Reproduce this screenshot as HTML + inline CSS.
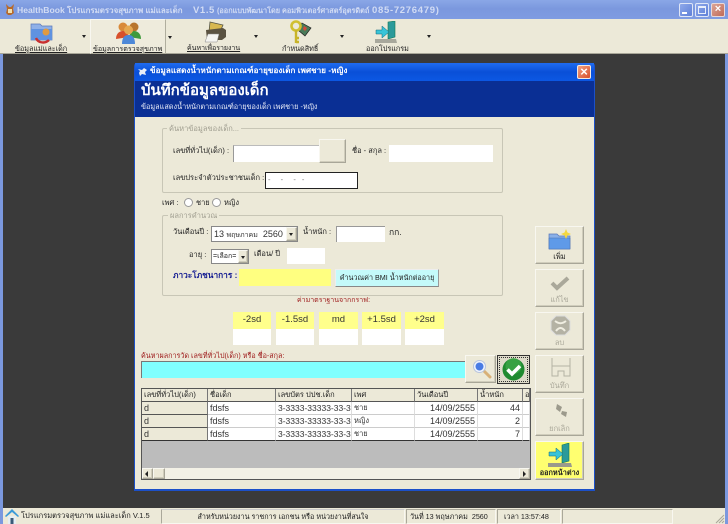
<!DOCTYPE html>
<html lang="th"><head><meta charset="utf-8"><title>HealthBook</title>
<style>
*{box-sizing:border-box}
html,body{margin:0;padding:0;width:728px;height:524px;overflow:hidden;background:#3a3a3a}
body{position:relative;font-family:"Liberation Sans","DejaVu Sans","Noto Sans CJK SC",sans-serif;font-size:7.5px;color:#222;filter:blur(.35px)}
.a{position:absolute;white-space:nowrap}
.t{position:absolute;white-space:nowrap;line-height:12px;height:12px}
.w{position:absolute;background:#fff}
.g{position:absolute;border:1px solid #c8c6b6;border-radius:2px}
.b{position:absolute;background:#ece9d8;border:1px solid;border-color:#f8f7f0 #a8a698 #a8a698 #f8f7f0;box-shadow:inset -1px -1px 0 #d0cdbc}
.btxt{position:absolute;left:0;right:0;bottom:1px;text-align:center;line-height:10px;font-size:7.5px;white-space:nowrap}
.dis{color:#aaa89a}
.arr{position:absolute;width:0;height:0;border:2px solid transparent;border-top:3px solid #222;border-bottom:0}
.cell{position:absolute;height:13px;line-height:12px;background:#fff;border-right:1px solid #ddd;border-bottom:1px solid #ccc;font-size:9px;color:#333;padding:0 2px;white-space:nowrap;overflow:hidden}
.h{background:#ece9d8;border-right:1px solid #777;border-bottom:1px solid #555;color:#222;font-size:7.5px}
.f{background:#ece9d8;border-right:1px solid #777;border-bottom:1px solid #555}
.r{text-align:right}
.sd{position:absolute;top:312px;height:17px;background:#ffff8c;text-align:center;line-height:15px;font-size:9.5px;color:#333}
.sw{position:absolute;top:329px;height:16px;background:#fff}
.sec{position:absolute;top:509px;height:15px;border:1px solid;border-color:#aaa89a #f8f7f0 #f8f7f0 #aaa89a;line-height:13px;font-size:7.2px;white-space:nowrap}
.tt{position:absolute;top:4px;white-space:nowrap;font-weight:bold;color:#d2dcf4;line-height:13px;height:13px}
.tb{position:absolute;top:43px;white-space:nowrap;line-height:12px;height:12px;font-size:7.2px}
</style></head><body>

<!-- main title bar -->
<div class="a" style="left:0;top:0;width:728px;height:19px;background:linear-gradient(180deg,#8aa7e6 0,#7b98de 45%,#7f9ce2 100%)"></div>
<svg class="a" style="left:4px;top:3px" width="12" height="13" viewBox="0 0 12 13"><path d="M2 1l3 3 2 0 3-3-1 5 1 4-3 2H4L2 10l1-4z" fill="#b86a2a"/><path d="M4 6h4v4H4z" fill="#f0e0b0"/></svg>
<div class="tt" style="left:17px;font-size:8.6px">HealthBook</div>
<div class="tt" style="left:67px;font-size:7.9px">โปรแกรมตรวจสุขภาพ แม่และเด็ก</div>
<div class="tt" style="left:193px;font-size:9.5px;letter-spacing:.6px">V1.5</div>
<div class="tt" style="left:217px;font-size:7.3px">(ออกแบบพัฒนาโดย คอมพิวเตอร์ศาสตร์อุตรดิตถ์</div>
<div class="tt" style="left:372px;font-size:9.5px;letter-spacing:.7px">085-7276479)</div>
<div class="a" style="left:679px;top:3px;width:14px;height:14px;background:linear-gradient(135deg,#8fa9ea,#5f80d8);border:1px solid #dfe6f7;border-radius:2px"><div class="a" style="left:2px;top:8px;width:5px;height:2px;background:#fff"></div></div>
<div class="a" style="left:695px;top:3px;width:14px;height:14px;background:linear-gradient(135deg,#8fa9ea,#5f80d8);border:1px solid #dfe6f7;border-radius:2px"><div class="a" style="left:2px;top:2px;width:8px;height:8px;border:1px solid #e8eefa;border-top-width:2px"></div></div>
<div class="a" style="left:711px;top:3px;width:14px;height:14px;background:linear-gradient(135deg,#dca596,#c06a58);border:1px solid #e8d8d8;border-radius:2px;color:#fff;font-size:11px;line-height:11px;text-align:center;font-weight:bold">×</div>

<!-- toolbar -->
<div class="a" style="left:0;top:19px;width:728px;height:35px;background:#ece9d8;border-bottom:1px solid #a8a698"></div>
<div class="a" style="left:90px;top:19px;width:76px;height:35px;background:#eeebdc;border:1px solid;border-color:#f8f7f0 #b0ae9e #b0ae9e #f8f7f0"></div>

<svg class="a" style="left:29px;top:21px" width="28" height="24" viewBox="0 0 28 24"><path d="M2 3h9l2 2h10v14H2z" fill="#8fb0e8" stroke="#5a78b8" stroke-width=".7"/><path d="M2 8h21v11H2z" fill="#5f92e0"/><circle cx="17" cy="11" r="3.5" fill="#e09a40"/><path d="M7 17c2 5 9 6 13 2" fill="none" stroke="#c83030" stroke-width="2.4"/></svg>
<div class="tb" style="left:15px;text-decoration:underline">ข้อมูลแม่และเด็ก</div>
<div class="arr" style="left:82px;top:35px"></div>

<svg class="a" style="left:115px;top:20px" width="27" height="24" viewBox="0 0 27 24"><circle cx="8" cy="7" r="4.5" fill="#d98a3a"/><circle cx="19" cy="7" r="4.5" fill="#b8752c"/><path d="M1 19c0-6 4-8 7-8s5 2 6 6z" fill="#d8502c"/><path d="M14 17c1-4 3-6 5-6 3 0 7 2 7 8z" fill="#3f9a3c"/><circle cx="13.500" cy="10" r="4.500" fill="#e6a850"/><path d="M7 24c0-7 3-9 6.500-9s6.500 2 6.500 9z" fill="#4d88d8"/></svg>
<div class="tb" style="left:93px;font-size:7.1px;text-decoration:underline">ข้อมูลการตรวจสุขภาพ</div>
<div class="arr" style="left:168px;top:36px"></div>

<svg class="a" style="left:203px;top:21px" width="24" height="23" viewBox="0 0 24 23"><path d="M7 1l13 3-3 7H6z" fill="#d8b850" stroke="#554" stroke-width=".8"/><path d="M3 9l17-2 3 2v7l-4 3H4z" fill="#5a5240"/><path d="M5 13h11l-2 8H2z" fill="#f4f4f0" stroke="#888" stroke-width=".5"/></svg>
<div class="tb" style="left:187px;font-size:7px;text-decoration:underline">ค้นหาเพื่อรายงาน</div>
<div class="arr" style="left:254px;top:35px"></div>

<svg class="a" style="left:289px;top:20px" width="24" height="25" viewBox="0 0 24 25"><path d="M13 3l9 5-6 8-7-6z" fill="#4a7a58" stroke="#222" stroke-width=".7"/><path d="M15 6l3 2-2 3-2-2z" fill="#d84838"/><circle cx="7" cy="6" r="4.500" fill="none" stroke="#d0c030" stroke-width="2.600"/><path d="M7 10v13M7 18h3M7 22h3" stroke="#c8b428" stroke-width="2.400" fill="none"/></svg>
<div class="tb" style="left:282px">กำหนดสิทธิ์</div>
<div class="arr" style="left:340px;top:35px"></div>

<svg class="a" style="left:375px;top:21px" width="23" height="23" viewBox="0 0 23 23"><path d="M13 1l7-1v16l-7 2z" fill="#2b9a9a" stroke="#175" stroke-width=".6"/><path d="M1 9h6V5l7 6-7 6v-4H1z" fill="#38c4d8" stroke="#167" stroke-width=".5"/><path d="M0 18h21l1 4H0z" fill="#a8a89c"/></svg>
<div class="tb" style="left:366px">ออกโปรแกรม</div>
<div class="arr" style="left:427px;top:35px"></div>

<!-- outer frame -->
<div class="a" style="left:0;top:54px;width:3px;height:470px;background:#7b98de"></div>
<div class="a" style="left:725px;top:54px;width:3px;height:470px;background:#7b98de"></div>

<!-- dialog -->
<div class="a" style="left:134px;top:63px;width:461px;height:428px;background:#1c50c8;border-radius:3px 3px 0 0"></div>
<div class="a" style="left:135px;top:63px;width:459px;height:18px;background:linear-gradient(180deg,#1f6cf0,#0a50d8 50%,#0c58e4)"></div>
<svg class="a" style="left:138px;top:67px" width="10" height="10" viewBox="0 0 10 10"><path d="M0 2l4 1 2-2 3 2-2 2 1 3-4-1-2 2-1-3 1-2z" fill="#e8eef8"/></svg>
<div class="t" style="left:150px;top:65px;color:#fff;font-size:8px;font-weight:bold;letter-spacing:.1px">ข้อมูลแสดงน้ำหนักตามเกณฑ์อายุของเด็ก เพศชาย -หญิง</div>
<div class="a" style="left:577px;top:65px;width:14px;height:14px;background:linear-gradient(135deg,#f0a080,#d8502c);border:1px solid #f4e8e0;border-radius:2px;color:#fff;font-size:13px;line-height:11px;text-align:center;font-weight:bold">×</div>
<div class="a" style="left:135px;top:81px;width:459px;height:36px;background:#0a2f94"></div>
<div class="t" style="left:141px;top:82px;color:#fff;font-size:15px;font-weight:bold;line-height:18px;height:18px">บันทึกข้อมูลของเด็ก</div>
<div class="t" style="left:141px;top:101px;color:#e4e8f6;font-size:7.3px">ข้อมูลแสดงน้ำหนักตามเกณฑ์อายุของเด็ก เพศชาย -หญิง</div>
<div class="a" style="left:135px;top:117px;width:459px;height:372px;background:#ece9d8"></div>

<!-- group 1 -->
<div class="g" style="left:162px;top:128px;width:341px;height:65px"></div>
<div class="t" style="left:167px;top:123px;padding:0 2px;background:#ece9d8;color:#a09e90">ค้นหาข้อมูลของเด็ก...</div>
<div class="t" style="left:173px;top:145px">เลขที่ทั่วไป(เด็ก) :</div>
<div class="w" style="left:233px;top:145px;width:87px;height:17px;border-left:1px solid #999;border-top:1px solid #bbb"></div>
<div class="b" style="left:319px;top:139px;width:27px;height:24px"></div>
<div class="t" style="left:352px;top:145px">ชื่อ - สกุล :</div>
<div class="w" style="left:389px;top:145px;width:104px;height:17px"></div>
<div class="t" style="left:173px;top:172px">เลขประจำตัวประชาชนเด็ก :</div>
<div class="w" style="left:265px;top:172px;width:93px;height:17px;border:1px solid #222;line-height:14px;padding-left:2px;color:#777;letter-spacing:2px">- &nbsp;- &nbsp;- -</div>

<div class="t" style="left:162px;top:197px">เพศ :</div>
<div class="a" style="left:184px;top:198px;width:9px;height:9px;border-radius:50%;background:#fff;border:1px solid #999"></div>
<div class="t" style="left:196px;top:197px">ชาย</div>
<div class="a" style="left:212px;top:198px;width:9px;height:9px;border-radius:50%;background:#fff;border:1px solid #999"></div>
<div class="t" style="left:224px;top:197px">หญิง</div>

<!-- group 2 -->
<div class="g" style="left:162px;top:215px;width:341px;height:81px"></div>
<div class="t" style="left:168px;top:210px;padding:0 2px;background:#ece9d8;color:#a09e90">ผลการคำนวณ</div>
<div class="t" style="left:173px;top:226px">วันเดือนปี :</div>
<div class="w" style="left:211px;top:226px;width:87px;height:16px;border:1px solid #888;font-size:9px;line-height:14px;padding-left:2px;color:#333">13 <span style="font-size:7px">พฤษภาคม</span> &nbsp;2560</div>
<div class="b" style="left:286px;top:227px;width:11px;height:14px"><div class="arr" style="left:2px;top:5px"></div></div>
<div class="t" style="left:303px;top:226px">น้ำหนัก :</div>
<div class="w" style="left:336px;top:226px;width:49px;height:16px;border-left:1px solid #999;border-top:1px solid #999"></div>
<div class="t" style="left:389px;top:226px;font-size:8.500px">กก.</div>
<div class="t" style="left:189px;top:249px">อายุ :</div>
<div class="w" style="left:211px;top:249px;width:38px;height:15px;border:1px solid #888;font-size:7px;line-height:13px;padding-left:1px">=เลือก=</div>
<div class="b" style="left:238px;top:250px;width:10px;height:13px"><div class="arr" style="left:2px;top:5px"></div></div>
<div class="t" style="left:254px;top:248px">เดือน/ ปี</div>
<div class="w" style="left:287px;top:248px;width:38px;height:16px"></div>
<div class="t" style="left:173px;top:269px;font-size:8.300px;font-weight:bold;color:#101890">ภาวะโภชนาการ :</div>
<div class="a" style="left:239px;top:269px;width:92px;height:17px;background:#ffff80"></div>
<div class="a" style="left:335px;top:269px;width:104px;height:18px;background:#c4fafa;border:1px solid;border-color:#eee #999 #888 #eee;font-size:7.2px;line-height:15px;text-align:center">คำนวณค่า BMI น้ำหนักต่ออายุ</div>

<div class="t" style="left:297px;top:295px;font-size:7px;color:#a02020">ค่ามาตราฐานจากกราฟ:</div>
<div class="sd" style="left:233px;width:38px">-2sd</div><div class="sw" style="left:233px;width:38px"></div>
<div class="sd" style="left:276px;width:38px">-1.5sd</div><div class="sw" style="left:276px;width:38px"></div>
<div class="sd" style="left:319px;width:39px">md</div><div class="sw" style="left:319px;width:39px"></div>
<div class="sd" style="left:362px;width:39px">+1.5sd</div><div class="sw" style="left:362px;width:39px"></div>
<div class="sd" style="left:405px;width:39px">+2sd</div><div class="sw" style="left:405px;width:39px"></div>

<div class="t" style="left:141px;top:350px;font-size:7.2px;color:#a02020">ค้นหาผลการวัด เลขที่ทั่วไป(เด็ก) หรือ ชื่อ-สกุล:</div>
<div class="a" style="left:141px;top:361px;width:325px;height:17px;background:#80ffff;border-left:1px solid #777;border-top:1px solid #777"></div>
<div class="b" style="left:465px;top:355px;width:31px;height:28px"></div>
<svg class="a" style="left:472px;top:359px" width="20" height="20" viewBox="0 0 20 20"><path d="M11 11l7 7" stroke="#d8b078" stroke-width="3" stroke-linecap="round"/><circle cx="7.500" cy="7.500" r="6" fill="#f0f4fc" stroke="#b8c4dc"/><circle cx="7.500" cy="7.500" r="4" fill="#4a7ce4"/></svg>
<div class="a" style="left:497px;top:355px;width:33px;height:29px;background:#dedbca;border:1px solid #333"></div>
<div class="a" style="left:499px;top:357px;width:29px;height:25px;border:1px dotted #333"></div>
<svg class="a" style="left:502px;top:358px" width="23" height="23" viewBox="0 0 23 23"><circle cx="11.500" cy="11.500" r="11" fill="#1f8a30"/><circle cx="11.500" cy="8" r="8" fill="#48b050" opacity=".6"/><path d="M5.500 11.500l4.500 4.500 8-8" fill="none" stroke="#fff" stroke-width="3.600"/></svg>

<!-- grid -->
<div class="a" style="left:141px;top:388px;width:390px;height:92px;background:#bcbcbc;border:1px solid #555"></div>
<div class="cell h" style="left:142px;top:389px;width:66px">เลขที่ทั่วไป(เด็ก)</div>
<div class="cell h" style="left:208px;top:389px;width:68px">ชื่อเด็ก</div>
<div class="cell h" style="left:276px;top:389px;width:76px">เลขบัตร ปปช.เด็ก</div>
<div class="cell h" style="left:352px;top:389px;width:63px">เพศ</div>
<div class="cell h" style="left:415px;top:389px;width:63px">วันเดือนปี</div>
<div class="cell h" style="left:478px;top:389px;width:45px">น้ำหนัก</div>
<div class="cell h" style="left:523px;top:389px;width:7px">อ</div>

<div class="cell f" style="left:142px;top:402px;width:66px">d</div><div class="cell" style="left:208px;top:402px;width:68px">fdsfs</div><div class="cell" style="left:276px;top:402px;width:76px;font-size:8.500px">3-3333-33333-33-3</div><div class="cell" style="left:352px;top:402px;width:63px;font-size:7.500px">ชาย</div><div class="cell r" style="left:415px;top:402px;width:63px">14/09/2555</div><div class="cell r" style="left:478px;top:402px;width:45px">44</div><div class="cell" style="left:523px;top:402px;width:7px"></div>
<div class="cell f" style="left:142px;top:415px;width:66px">d</div><div class="cell" style="left:208px;top:415px;width:68px">fdsfs</div><div class="cell" style="left:276px;top:415px;width:76px;font-size:8.500px">3-3333-33333-33-3</div><div class="cell" style="left:352px;top:415px;width:63px;font-size:7.500px">หญิง</div><div class="cell r" style="left:415px;top:415px;width:63px">14/09/2555</div><div class="cell r" style="left:478px;top:415px;width:45px">2</div><div class="cell" style="left:523px;top:415px;width:7px"></div>
<div class="cell f" style="left:142px;top:428px;width:66px;border-bottom-color:#333">d</div><div class="cell" style="left:208px;top:428px;width:68px;border-bottom-color:#333">fdsfs</div><div class="cell" style="left:276px;top:428px;width:76px;font-size:8.500px;border-bottom-color:#333">3-3333-33333-33-3</div><div class="cell" style="left:352px;top:428px;width:63px;font-size:7.500px;border-bottom-color:#333">ชาย</div><div class="cell r" style="left:415px;top:428px;width:63px;border-bottom-color:#333">14/09/2555</div><div class="cell r" style="left:478px;top:428px;width:45px;border-bottom-color:#333">7</div><div class="cell" style="left:523px;top:428px;width:7px;border-bottom-color:#333"></div>

<div class="a" style="left:142px;top:468px;width:388px;height:11px;background:#f3f1e6"></div>
<div class="b" style="left:142px;top:468px;width:11px;height:11px"></div>
<div class="a" style="left:145px;top:471px;border:3px solid transparent;border-right:3px solid #222;border-left:0"></div>
<div class="b" style="left:153px;top:468px;width:12px;height:11px"></div>
<div class="b" style="left:519px;top:468px;width:11px;height:11px"></div>
<div class="a" style="left:523px;top:471px;border:3px solid transparent;border-left:3px solid #222;border-right:0"></div>

<!-- side buttons -->
<div class="b" style="left:535px;top:226px;width:49px;height:38px">
<svg class="a" style="left:12px;top:2px" width="24" height="22" viewBox="0 0 24 22"><path d="M1 5h8l2 2h11v13H1z" fill="#8ab0e8" stroke="#5a78b8" stroke-width=".7"/><path d="M1 9h21v11H1z" fill="#5f9ae8" stroke="#4a70b0" stroke-width=".5"/><path d="M18 0l1.500 3.500L23 5l-3.500 1.500L18 10l-1.500-3.500L13 5l3.500-1.500z" fill="#f4d840"/></svg>
<div class="btxt" style="color:#222">เพิ่ม</div></div>

<div class="b" style="left:535px;top:269px;width:49px;height:38px">
<svg class="a" style="left:14px;top:5px" width="20" height="16" viewBox="0 0 20 16"><path d="M2 8l5 5L18 3" fill="none" stroke="#aaa89a" stroke-width="4"/></svg>
<div class="btxt dis">แก้ไข</div></div>

<div class="b" style="left:535px;top:312px;width:49px;height:38px">
<svg class="a" style="left:14px;top:2px" width="21" height="21" viewBox="0 0 21 21"><path d="M6 1h9l5 5v9l-5 5H6l-5-5V6z" fill="#b4b2a4" stroke="#ddd" stroke-width="1"/><path d="M5 6c4 3 7 3 11 0M6 16c3-4 6-4 9 0" stroke="#f0eee2" stroke-width="2" fill="none"/></svg>
<div class="btxt dis">ลบ</div></div>

<div class="b" style="left:535px;top:355px;width:49px;height:38px">
<svg class="a" style="left:14px;top:1px" width="22" height="23" viewBox="0 0 22 23"><path d="M2 1v18h6v-5h6v5h6V1M2 9h18" fill="none" stroke="#b4b2a4" stroke-width="1"/></svg>
<div class="btxt dis">บันทึก</div></div>

<div class="b" style="left:535px;top:398px;width:49px;height:38px">
<svg class="a" style="left:17px;top:4px" width="16" height="16" viewBox="0 0 16 16"><path d="M4 1l5 3-2 5-4-3zM9 8l5 1-1 5-5-3z" fill="#9c9a8c"/></svg>
<div class="btxt dis">ยกเลิก</div></div>

<div class="b" style="left:535px;top:441px;width:49px;height:39px;background:#ffff70">
<svg class="a" style="left:12px;top:1px" width="25" height="25" viewBox="0 0 25 25"><path d="M14 2l7-2v18l-7 2z" fill="#2b9a9a" stroke="#175" stroke-width=".6"/><path d="M1 9h7V5l7 6-7 6v-4H1z" fill="#38c4d8" stroke="#167" stroke-width=".5"/><path d="M0 20h23l1 4H0z" fill="#9a9a8c"/></svg>
<div class="btxt" style="font-weight:bold;font-size:7.3px;color:#222">ออกหน้าต่าง</div></div>

<!-- status bar -->
<div class="a" style="left:3px;top:508px;width:722px;height:16px;background:#ece9d8"></div>
<svg class="a" style="left:4px;top:508px" width="16" height="16" viewBox="0 0 16 16"><path d="M1 8l7-7 7 7-1 1-6-5-6 5z" fill="#3a9ad8"/><path d="M4 8h8v8H4z" fill="#e4eef4"/><path d="M6.500 10h3v6h-3z" fill="#3a5a78"/></svg>
<div class="t" style="left:21px;top:510px;font-size:7.5px">โปรแกรมตรวจสุขภาพ แม่และเด็ก V.1.5</div>
<div class="sec" style="left:161px;width:244px;text-align:center;border-top-color:#ccc">สำหรับหน่วยงาน ราชการ เอกชน หรือ หน่วยงานที่สนใจ</div>
<div class="sec" style="left:406px;width:90px;padding-left:3px">วันที่ 13 พฤษภาคม &nbsp;2560</div>
<div class="sec" style="left:497px;width:64px;padding-left:6px">เวลา 13:57:48</div>
<div class="sec" style="left:562px;width:111px"></div>
<svg class="a" style="left:715px;top:514px" width="10" height="10" viewBox="0 0 10 10"><path d="M9 1L1 9M9 4L4 9M9 7L7 9" stroke="#a8a698" stroke-width="1"/></svg>
</body></html>
